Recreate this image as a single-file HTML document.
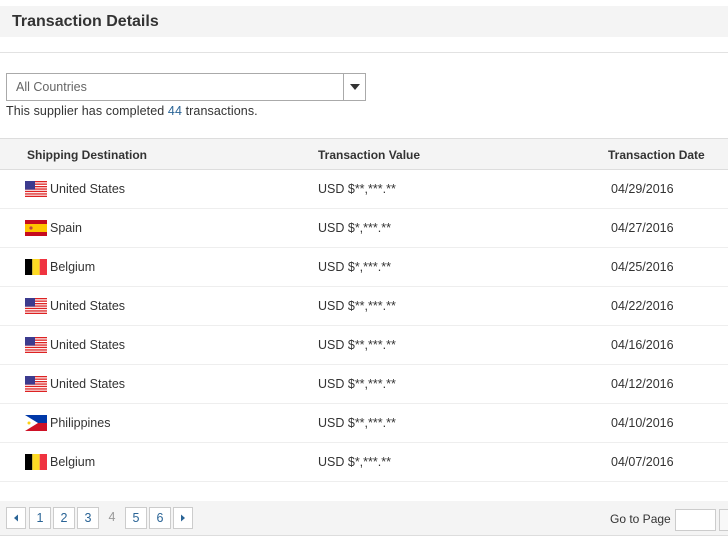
<!DOCTYPE html>
<html><head><meta charset="utf-8"><style>
*{margin:0;padding:0;box-sizing:border-box}
body{width:728px;height:538px;background:#fff;font-family:"Liberation Sans",Arial,sans-serif;color:#333;position:relative;overflow:hidden;font-size:12.5px}
.abs{position:absolute}
.title{left:0;top:6px;width:728px;height:31px;background:#f4f4f4;font-size:16px;font-weight:bold;color:#333;padding:7px 0 0 12px}
.hr{left:0;top:52px;width:728px;height:1px;background:#e2e2e2}
.sel{left:6px;top:73px;width:360px;height:28px;border:1px solid #aaa;background:#fff}
.sel span{position:absolute;left:9px;top:6px;color:#666;font-size:12.5px}
.sel .arr{position:absolute;right:0;top:0;width:22px;height:26px;border-left:1px solid #aaa}
.sel .arr:after{content:"";position:absolute;left:6px;top:10px;border-left:5px solid transparent;border-right:5px solid transparent;border-top:6px solid #333}
.info{left:6px;top:104px;font-size:12.5px;letter-spacing:0.1px}
.info b{font-weight:normal;color:#2a6496}
.thead{left:0;top:138px;width:728px;height:32px;background:#f4f4f4;border-top:1px solid #ddd;border-bottom:1px solid #ddd;font-weight:bold;font-size:12px}
.thead div{position:absolute;top:9px}
.row{left:0;width:728px;height:39px;border-bottom:1px solid #eee;font-size:12.5px}
.row div{position:absolute;top:12px}
.flag{position:absolute;left:25px;top:11px;width:22px;height:16px}
.pbar{left:0;top:501px;width:728px;height:35px;background:#f4f4f4;border-bottom:1px solid #ddd}
.pb{position:absolute;top:6px;height:22px;border:1px solid #ccc;background:#fff;color:#2a6496;text-align:center;line-height:20px;font-size:12.5px}
</style></head><body>
<div class="abs title">Transaction Details</div>
<div class="abs hr"></div>
<div class="abs sel"><span>All Countries</span><div class="arr"></div></div>
<div class="abs info">This supplier has completed <b>44</b> transactions.</div>
<div class="abs thead"><div style="left:27px">Shipping Destination</div><div style="left:318px">Transaction Value</div><div style="left:608px">Transaction Date</div></div>

<svg width="0" height="0" style="position:absolute"><defs>
<g id="us"><rect width="22" height="16" fill="#fff"/><g fill="#d22"><rect y="0" width="22" height="1.3"/><rect y="2.5" width="22" height="1.3"/><rect y="5" width="22" height="1.3"/><rect y="7.4" width="22" height="1.3"/><rect y="9.8" width="22" height="1.3"/><rect y="12.3" width="22" height="1.3"/><rect y="14.7" width="22" height="1.3"/></g><rect width="10" height="8.6" fill="#3c3b8e"/></g>
<g id="es"><rect width="22" height="16" fill="#c60b1e"/><rect y="4" width="22" height="8" fill="#ffc400"/><circle cx="6" cy="8" r="1.6" fill="#b44"/></g>
<g id="be"><rect width="7.3" height="16" fill="#000"/><rect x="7.3" width="7.4" height="16" fill="#fdda24"/><rect x="14.7" width="7.3" height="16" fill="#ef3340"/></g>
<g id="ph"><rect width="22" height="8" fill="#0038a8"/><rect y="8" width="22" height="8" fill="#ce1126"/><path d="M0 0L13 8L0 16Z" fill="#fff"/><circle cx="4" cy="8" r="1.5" fill="#fcd116"/></g>
</defs></svg>

<div class="abs row" style="top:170px"><svg class="flag"><use href="#us"/></svg><div style="left:50px">United States</div><div style="left:318px">USD $**,***.**</div><div style="left:611px">04/29/2016</div></div>
<div class="abs row" style="top:209px"><svg class="flag"><use href="#es"/></svg><div style="left:50px">Spain</div><div style="left:318px">USD $*,***.**</div><div style="left:611px">04/27/2016</div></div>
<div class="abs row" style="top:248px"><svg class="flag"><use href="#be"/></svg><div style="left:50px">Belgium</div><div style="left:318px">USD $*,***.**</div><div style="left:611px">04/25/2016</div></div>
<div class="abs row" style="top:287px"><svg class="flag"><use href="#us"/></svg><div style="left:50px">United States</div><div style="left:318px">USD $**,***.**</div><div style="left:611px">04/22/2016</div></div>
<div class="abs row" style="top:326px"><svg class="flag"><use href="#us"/></svg><div style="left:50px">United States</div><div style="left:318px">USD $**,***.**</div><div style="left:611px">04/16/2016</div></div>
<div class="abs row" style="top:365px"><svg class="flag"><use href="#us"/></svg><div style="left:50px">United States</div><div style="left:318px">USD $**,***.**</div><div style="left:611px">04/12/2016</div></div>
<div class="abs row" style="top:404px"><svg class="flag"><use href="#ph"/></svg><div style="left:50px">Philippines</div><div style="left:318px">USD $**,***.**</div><div style="left:611px">04/10/2016</div></div>
<div class="abs row" style="top:443px"><svg class="flag"><use href="#be"/></svg><div style="left:50px">Belgium</div><div style="left:318px">USD $*,***.**</div><div style="left:611px">04/07/2016</div></div>

<div class="abs pbar">
<div class="pb" style="left:6px;width:20px"><svg width="18" height="20"><path d="M7 10L11 6.5V13.5Z" fill="#2a6496"/></svg></div>
<div class="pb" style="left:29px;width:22px">1</div>
<div class="pb" style="left:53px;width:22px">2</div>
<div class="pb" style="left:77px;width:22px">3</div>
<div class="pb" style="left:101px;width:22px;border:none;background:none;color:#999">4</div>
<div class="pb" style="left:125px;width:22px">5</div>
<div class="pb" style="left:149px;width:22px">6</div>
<div class="pb" style="left:173px;width:20px"><svg width="18" height="20"><path d="M11 10L7 6.5V13.5Z" fill="#2a6496"/></svg></div>
<div style="position:absolute;left:610px;top:11px;font-size:12px">Go to Page</div>
<div style="position:absolute;left:675px;top:8px;width:41px;height:22px;border:1px solid #ccc;background:#fff"></div>
<div style="position:absolute;left:719px;top:8px;width:20px;height:22px;border:1px solid #ccc;background:#f8f8f8"></div>
</div>
</body></html>
